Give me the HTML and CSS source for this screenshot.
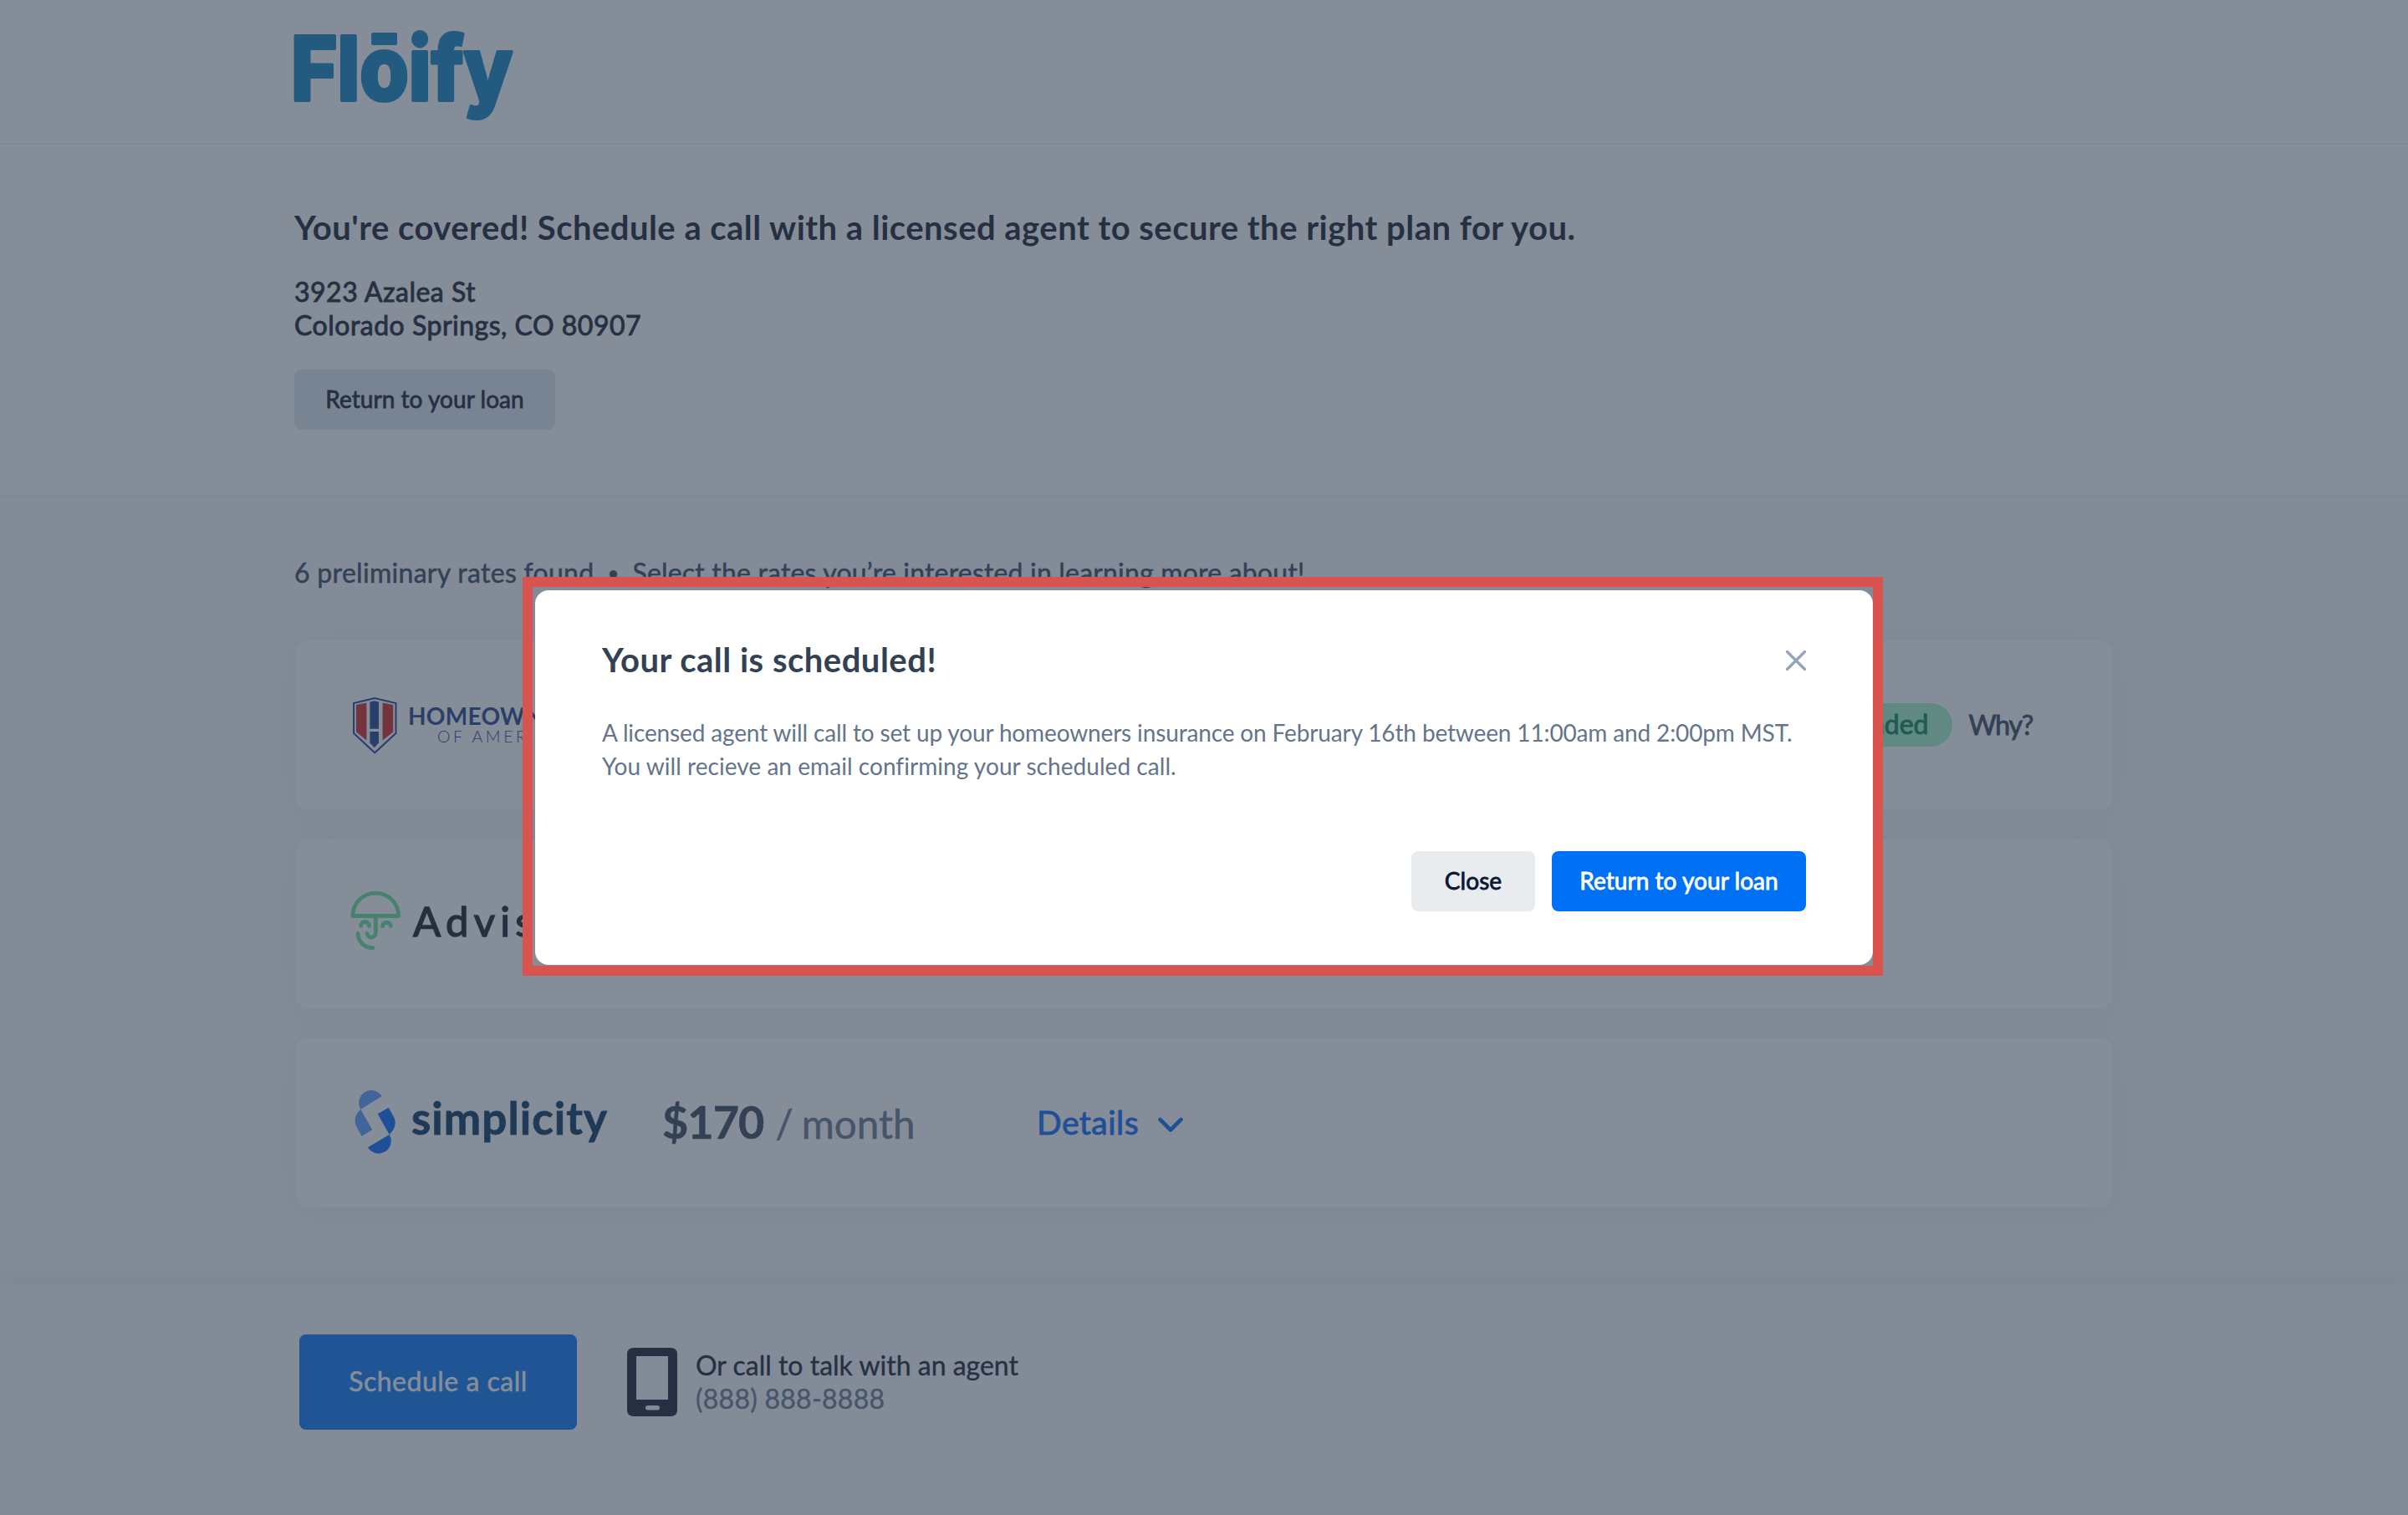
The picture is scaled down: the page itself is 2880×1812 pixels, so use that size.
FILE: index.html
```
<!DOCTYPE html>
<html lang="en">
<head>
    <meta charset="UTF-8">
    <meta name="viewport" content="width=device-width, initial-scale=1.0">
    <title>Floify | Homeowners insurance</title>
    <link rel="stylesheet" href="styles.css">
</head>
<body>
    <header class="header">
        <div class="container">
            <svg class="logo" width="264" height="132" viewBox="0 0 264 132">
                <text x="-4" y="98" textLength="265" lengthAdjust="spacingAndGlyphs">Flōify</text>
            </svg>
        </div>
    </header>

    <section class="intro">
        <div class="container">
            <h1>You're covered! Schedule a call with a licensed agent to secure the right plan for you.</h1>
            <p class="address">3923 Azalea St<br>Colorado Springs, CO 80907</p>
            <button class="btn btn-light">Return to your loan</button>
        </div>
    </section>

    <main class="rates">
        <div class="container">
            <p class="rates-title"><span class="count">6 preliminary rates found</span><span class="dot">•</span><span class="hint">Select the rates you’re interested in learning more about!</span></p>

            <div class="card">
                <svg class="brand" width="312" height="100" viewBox="0 0 312 100">
                    <path d="M30.2 18 5.1 24V60L30.2 83.3 55.5 60V24Z" fill="none" stroke="#1b3c87" stroke-width="2"/>
                    <path d="M8 26 20.4 23.5V68.5L8 58.5Z" fill="#d21e20"/>
                    <path d="M39.6 23.5 52.2 26V58.5L39.6 68.5Z" fill="#d21e20"/>
                    <path d="M24.4 22.5 29.8 21.3 35 22.5V54.7H24.4Z" fill="#1b3c87"/>
                    <path d="M24.4 58H35V71.5L29.8 77.3 24.4 71.5Z" fill="#1b3c87"/>
                    <text class="homeowners" x="70" y="50">HOMEOWNERS</text>
                    <text class="of-america" x="105" y="71">OF AMERICA</text>
                </svg>
                <div class="card-end">
                    <span class="badge">Recommended</span>
                    <span class="why">Why?</span>
                </div>
            </div>

            <div class="card">
                <svg class="brand" width="312" height="100" viewBox="0 0 312 100">
                    <g fill="none" stroke="#62e494" stroke-width="4.8" stroke-linecap="round" stroke-linejoin="round">
                        <path d="M3.8 40.5A27.3 27.3 0 0 1 58.7 40.5Z"/>
                        <path d="M13.5 52.5a5 5 0 0 1 10 0"/>
                        <path d="M39.6 52.5a5 5 0 0 1 9.8 0"/>
                        <path d="M31.3 41V61.5a5.2 5.2 0 0 1-10.3 0"/>
                        <path d="M10 61.5A18 17.3 0 0 0 28 78.7"/>
                    </g>
                    <text class="advisor" x="76" y="65">Advisor</text>
                </svg>
            </div>

            <div class="card">
                <svg class="brand" width="312" height="100" viewBox="0 0 312 100">
                    <path d="M13.3 33.7A14.8 14.8 0 0 1 38.7 18.3Z" fill="#589bff"/>
                    <path d="M13.3 33.7 27.3 58.3 14.7 66 9 56Q2.5 44 13.3 33.7Z" fill="#589bff"/>
                    <path d="M46.7 31.7 33.7 39.3 47.7 64Q58.5 53 52.5 42Z" fill="#0068fa"/>
                    <path d="M47.7 64A14.8 14.8 0 0 1 22 79.3Z" fill="#0068fa"/>
                    <text class="simplicity" x="74" y="64" textLength="234">simplicity</text>
                </svg>
                <div class="price"><strong>$170</strong><span class="slash">/</span><span>month</span></div>
                <div class="details">
                    <span>Details</span>
                    <svg width="34" height="22" viewBox="0 0 34 22"><path d="M4.5 4 17 16.5 29.5 4" fill="none" stroke="#0068fa" stroke-width="4.6" stroke-linecap="round" stroke-linejoin="round"/></svg>
                </div>
            </div>
        </div>
    </main>

    <footer class="footer">
        <div class="container">
            <button class="btn-schedule">Schedule a call</button>
            <svg class="phone" width="60" height="82" viewBox="0 0 60 82">
                <path fill="#0f172a" fill-rule="evenodd" d="M8 0H52Q60 0 60 8V74Q60 82 52 82H8Q0 82 0 74V8Q0 0 8 0ZM11 10V62H49V10ZM25 69Q22 69 22 71.7T25 74.5H36Q39 74.5 39 71.7T36 69Z"/>
            </svg>
            <div class="contact">
                <div>Or call to talk with an agent</div>
                <div class="number">(888) 888-8888</div>
            </div>
        </div>
    </footer>

    <div class="overlay">
        <div class="modal">
            <div class="highlight"></div>
            <div class="modal-head">
                <h2>Your call is scheduled!</h2>
                <svg width="24" height="24" viewBox="0 0 24 24"><path d="M1.5 1.5 22.5 22.5M22.5 1.5 1.5 22.5" stroke="#94a3b8" stroke-width="3.2" stroke-linecap="round"/></svg>
            </div>
            <p>A licensed agent will call to set up your homeowners insurance on February 16th between 11:00am and 2:00pm MST. <br><span>You will recieve an email confirming your scheduled call.</span></p>
            <div class="modal-actions">
                <button class="btn btn-close">Close</button>
                <button class="btn btn-primary">Return to your loan</button>
            </div>
        </div>
    </div>
</body>
</html>
```
FILE: styles.css
```
* { box-sizing: border-box; }
html, body { margin: 0; padding: 0; height: 100%; overflow: hidden; }
body {
    font-family: Lato, "Open Sans", sans-serif;
    font-size: 32px; line-height: 40px;
    color: #334155; background: #f9fafd;
}
h1, h2, p { margin: 0; }
svg { display: block; flex: none; }
button { border: 0; font-family: inherit; white-space: nowrap; }
.container { width: 2176px; margin: 0 auto; }

.header { height: 173px; padding-top: 22px; background: #fff; border-bottom: 2px solid #edf2fa; }
.logo { overflow: visible; }
.logo text { font: 800 106px Inter, sans-serif; fill: #0a7fc0; stroke: #0a7fc0; stroke-width: 4px; stroke-linejoin: round; }

.intro { height: 421px; padding-top: 75px; background: #fff; border-bottom: 2px solid #edf2f7; }
h1 { font-size: 40px; line-height: 48px; font-weight: 700; letter-spacing: 0.47px; color: #0f172a; }
.address { margin: 33px 0; color: #0f172a; letter-spacing: 0.5px; -webkit-text-stroke: 0.9px; }
.btn {
    height: 72px; padding: 0 0 2px; border-radius: 8px;
    font-size: 28px; letter-spacing: 0.05px; -webkit-text-stroke: 0.8px;
}
.btn-light { display: block; width: 312px; background: #e2e8f0; color: #0f172a; }

.rates { padding-top: 71px; height: 942px; }
.rates-title { display: flex; margin-bottom: 59px; -webkit-text-stroke: 0.5px; }
.rates-title .count { letter-spacing: 0.3px; }
.rates-title .dot { width: 46px; text-align: center; font-size: 24px; }
.rates-title .hint { letter-spacing: 0.18px; }
.card {
    display: flex; align-items: center;
    height: 206px; margin-bottom: 32px; padding: 0 95px 0 64px;
    background: #fff; border: 2px solid #f1f5f9; border-radius: 16px;
    box-shadow: 0 4px 40px rgba(100, 130, 170, 0.1);
}
.homeowners { font-size: 28px; font-weight: 700; letter-spacing: 0.3px; fill: #1b3c87; }
.of-america { font-size: 19.5px; font-weight: 300; letter-spacing: 3.6px; fill: #1b3c87; }
.advisor { font-size: 49px; letter-spacing: 6.3px; fill: #12131f; stroke: #12131f; stroke-width: 1.5px; }
.simplicity { font-size: 53px; font-weight: 700; fill: #00305a; stroke: #00305a; stroke-width: 0.8px; }
.card-end { display: flex; align-items: center; gap: 20px; margin-left: auto; }
.badge {
    height: 52px; line-height: 50px; padding: 0 28px; border-radius: 26px;
    background: #a2f5c4; color: #047f52; -webkit-text-stroke: 0.9px;
}
.why { -webkit-text-stroke: 0.9px; padding-bottom: 1px; letter-spacing: -1.2px; }
.price {
    display: flex; align-items: baseline; width: 448px; margin-left: 62px;
    font-size: 47.5px; line-height: 60px; color: #64748b; -webkit-text-stroke: 0.5px;
}
.price strong { font-size: 54px; letter-spacing: -1px; color: #334155; -webkit-text-stroke: 0.5px; }
.price .slash { margin: 0 10px 0 14px; }
.details { display: flex; align-items: center; gap: 21px; padding-bottom: 2px; font-size: 39px; letter-spacing: 0.5px; color: #0068fa; -webkit-text-stroke: 0.9px; }
.details svg { margin-top: 7px; }

.footer { height: 276px; padding-top: 60px; background: #fafbfd; box-shadow: 0 -4px 32px rgba(80, 110, 130, 0.14); }
.footer .container { display: flex; align-items: center; padding-left: 6px; }
.btn-schedule {
    width: 332px; height: 114px; margin-right: 60px; padding: 0 0 3px; border-radius: 8px;
    background: #0070f4; color: #fff; font-size: 32px; letter-spacing: 0.5px; -webkit-text-stroke: 0.5px;
}
.contact { margin-left: 22px; padding-bottom: 1px; color: #0f172a; -webkit-text-stroke: 0.4px; }
.contact .number { letter-spacing: 0.25px; color: #64748b; }

.overlay {
    position: fixed; top: 0; left: 0; width: 100%; height: 100%;
    background: rgba(51, 65, 85, 0.6);
    display: flex; justify-content: center; align-items: flex-start; padding-top: 706px;
}
.modal {
    position: relative; width: 1600px; height: 448px; padding: 59px 80px 64px;
    background: #fff; border-radius: 16px;
}
.highlight { position: absolute; top: -16px; right: -12px; bottom: -13px; left: -15px; border: 12px solid #d9534f; }
.modal-head { display: flex; justify-content: space-between; align-items: center; }
.modal h2 { font-size: 40px; line-height: 48px; font-weight: 700; letter-spacing: 0.5px; }
.modal svg { margin-top: 2px; }
.modal p { margin: 43px 0 82px; font-size: 28px; white-space: nowrap; letter-spacing: -0.14px; color: #64748b; }
.modal p span { letter-spacing: 0.05px; }
.modal-actions { display: flex; justify-content: flex-end; gap: 20px; }
.btn-close { width: 148px; background: #e8ecef; color: #0a1633; }
.btn-primary { width: 304px; background: #0070f4; color: #fff; }
```
